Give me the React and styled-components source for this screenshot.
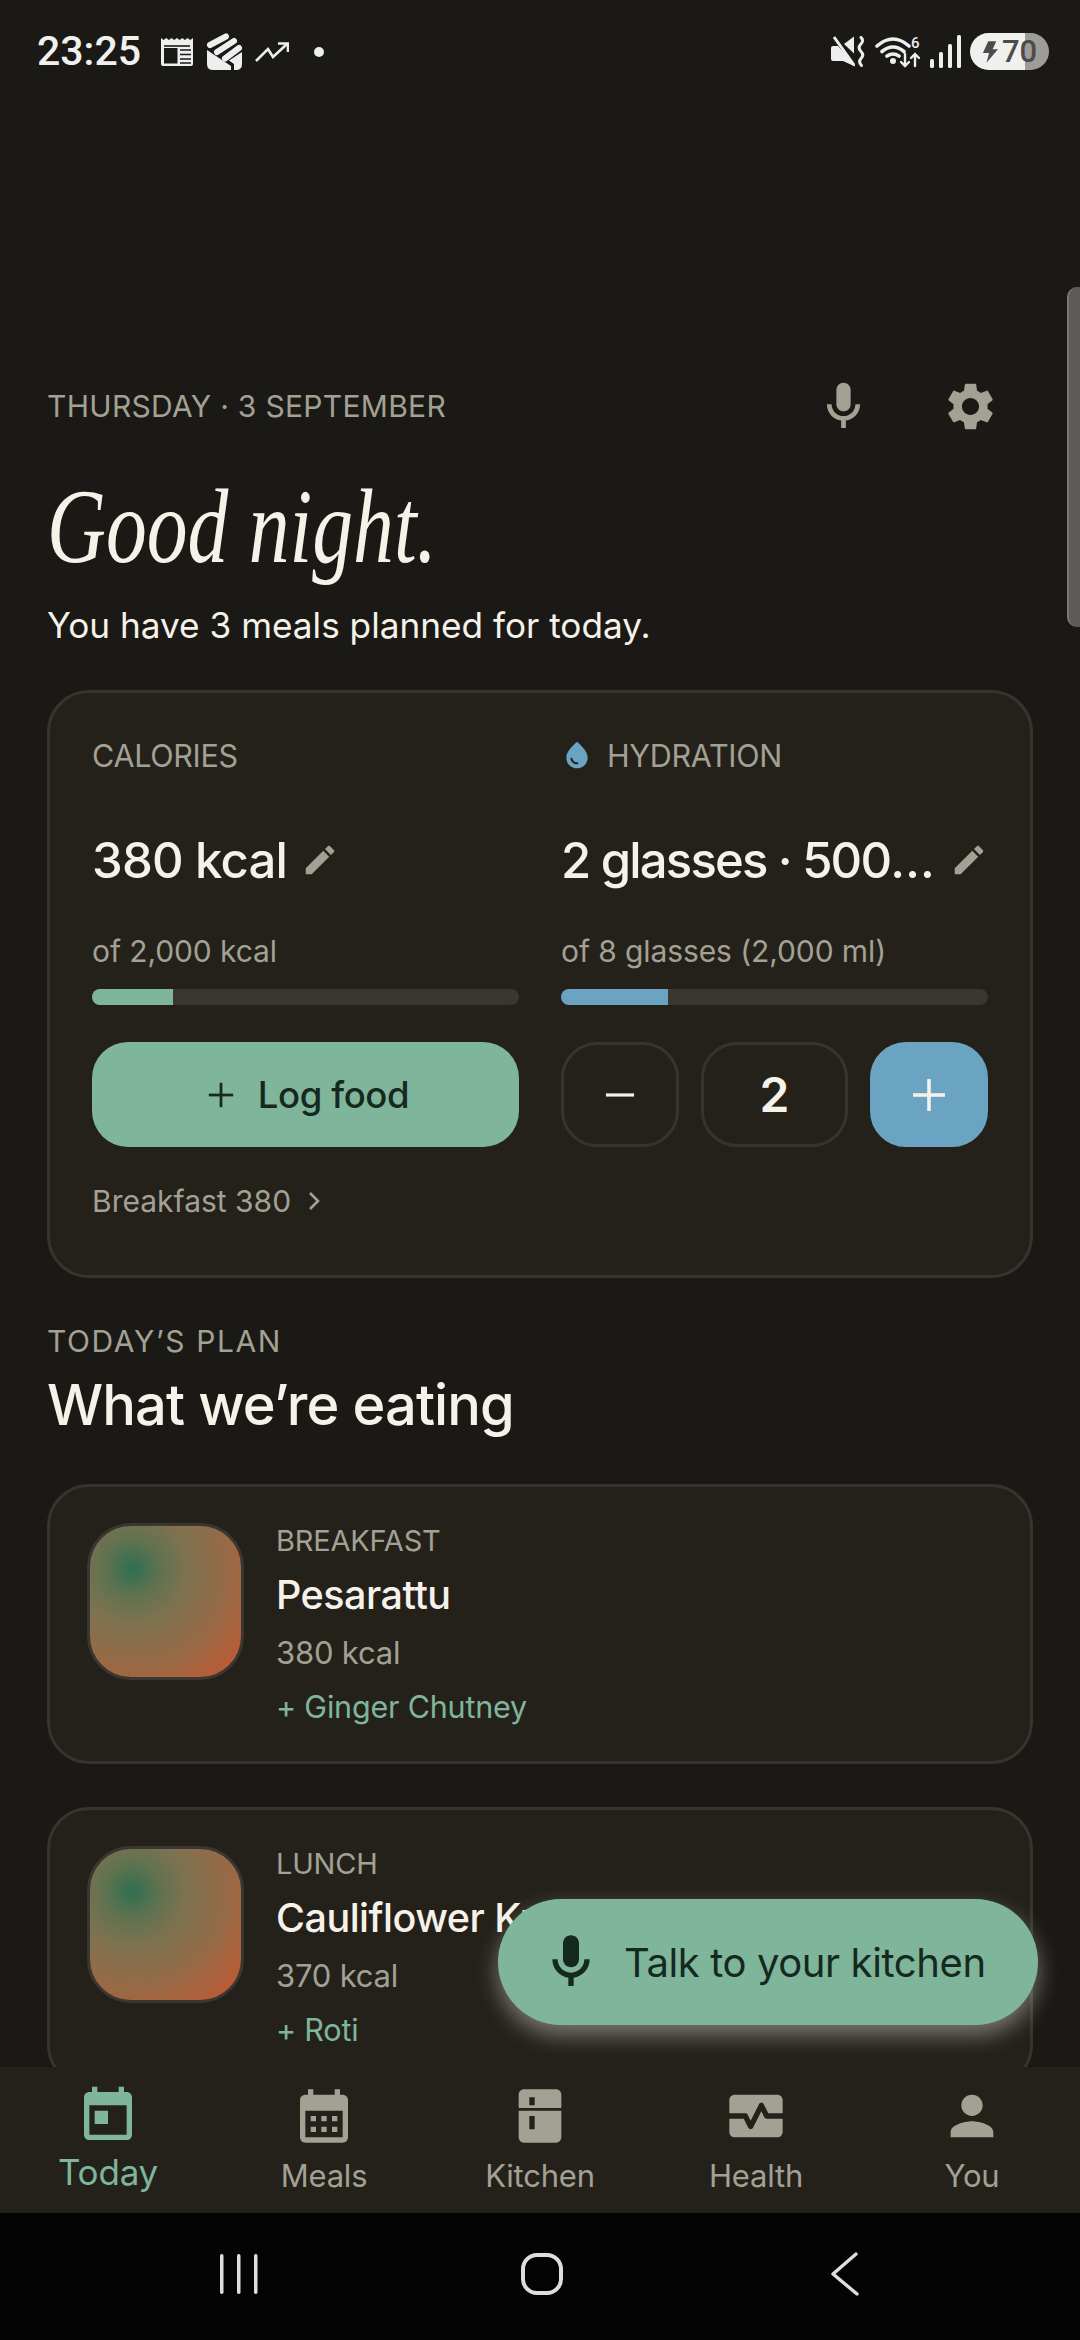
import React from "react";
import styled, { createGlobalStyle } from "styled-components";

const colors = {
  page: "#1a1915",
  card: "#24211b",
  line: "#37342e",
  track: "#3a3631",
  text: "#f6f2e9",
  muted: "#a3a094",
  sage: "#7fb59b",
  blue: "#6ba3c3",
  ink: "#16291f",
};
const sans = `Inter, "Liberation Sans", sans-serif`;

const GlobalStyle = createGlobalStyle`
  html, body {
    margin: 0;
    padding: 0;
    background: ${colors.page};
  }
  * {
    box-sizing: border-box;
  }
`;

const Phone = styled.div`
  position: relative;
  width: 1080px;
  height: 2340px;
  display: flex;
  flex-direction: column;
  overflow: hidden;
  background: ${colors.page};
  font-family: ${sans};
  color: ${colors.text};
`;

/* status bar */
const StatusBar = styled.div`
  flex: 0 0 100px;
  display: flex;
  align-items: flex-start;
  justify-content: space-between;
  padding: 33px 31px 0 37px;
`;
const StatusGroup = styled.div`
  display: flex;
  align-items: center;
  height: 37px;
  gap: ${(p) => p.$gap || 10}px;
`;
const Clock = styled.span`
  font-family: Roboto, sans-serif;
  font-size: 41px;
  font-weight: 500;
  line-height: 37px;
  color: #f0f0ee;
  margin-right: 7px;
`;
const Battery = styled.div`
  width: 79px;
  height: 37px;
  border-radius: 19px;
  display: flex;
  align-items: center;
  justify-content: center;
  gap: 4px;
  background: linear-gradient(to right, #f0f0ee 70%, #9e9c98 70%);
  color: #4c4c4c;
  font-family: Roboto, sans-serif;
  font-size: 31px;
  font-weight: 500;
`;

/* scrolling content */
const Scroll = styled.main`
  flex: 1;
  min-height: 0;
  overflow: hidden;
  padding: 276px 47px 0 47px;
`;
const DateRow = styled.div`
  height: 60px;
  display: flex;
  align-items: center;
`;
const DateText = styled.div`
  flex: 1;
  font-size: 30px;
  letter-spacing: 0.3px;
  color: ${colors.muted};
`;
const IconButton = styled.span`
  display: flex;
  color: ${colors.muted};
  margin-left: ${(p) => p.$left || 0}px;
  margin-right: ${(p) => p.$right || 0}px;
`;
const Greeting = styled.h1`
  margin: 31px 0 0;
  font-family: "Liberation Serif", serif;
  font-style: italic;
  font-weight: 400;
  font-size: 106px;
  line-height: 120px;
  transform: scaleX(0.77);
  transform-origin: left center;
  color: ${colors.text};
`;
const Subtitle = styled.p`
  margin: 13px 0 0;
  height: 90px;
  font-size: 35.2px;
  line-height: 50px;
`;
const Panel = styled.section`
  background: ${colors.card};
  border: 3px solid ${colors.line};
  border-radius: 42px;
  padding: 42px 41px 54px 42px;
  display: grid;
  grid-template-columns: 427px 427px;
  column-gap: 42px;
`;
const Column = styled.div`
  display: flex;
  flex-direction: column;
  min-width: 0;
`;
const Label = styled.div`
  display: flex;
  align-items: center;
  gap: 12px;
  height: 40px;
  font-size: 30.5px;
  letter-spacing: -0.3px;
  color: ${colors.muted};
`;
const Value = styled.div`
  display: flex;
  align-items: center;
  justify-content: ${(p) => (p.$spread ? "space-between" : "flex-start")};
  height: 60px;
  margin-top: 55px;
  gap: ${(p) => (p.$spread ? 4 : 14)}px;
`;
const ValueText = styled.span`
  font-size: 49px;
  font-weight: 500;
  letter-spacing: ${(p) => (p.$tight ? -1.8 : -0.8)}px;
  white-space: nowrap;
  overflow: hidden;
  text-overflow: ellipsis;
`;
const Target = styled.div`
  margin-top: 41px;
  height: 40px;
  line-height: 40px;
  font-size: 30px;
  letter-spacing: -0.1px;
  color: ${colors.muted};
`;
const Track = styled.div`
  margin-top: 18px;
  height: 16px;
  border-radius: 8px;
  background: ${colors.track};
  overflow: hidden;
`;
const Fill = styled.div`
  height: 100%;
  background: ${(p) => p.$color};
`;
const Controls = styled.div`
  margin-top: 37px;
  height: 105px;
  display: flex;
  gap: 22px;
`;
const LogButton = styled.button`
  flex: 1;
  border: 0;
  border-radius: 36px;
  padding: 0 0 0 6px;
  background: ${colors.sage};
  color: ${colors.ink};
  display: flex;
  align-items: center;
  justify-content: center;
  gap: 24px;
  font-family: ${sans};
  font-size: 36.5px;
  font-weight: 500;
  letter-spacing: -0.4px;
`;
const StepButton = styled.button`
  flex: ${(p) => (p.$wide ? "0 0 147px" : "1")};
  display: flex;
  align-items: center;
  justify-content: center;
  border-radius: 36px;
  border: 3px solid ${(p) => (p.$filled ? colors.blue : colors.line)};
  background: ${(p) => (p.$filled ? colors.blue : "transparent")};
  color: ${colors.text};
  font-family: ${sans};
  font-size: 48px;
  font-weight: 600;
`;
const Breakdown = styled.div`
  margin-top: 34px;
  height: 40px;
  display: flex;
  align-items: center;
  gap: 16px;
  font-size: 30px;
  color: ${colors.muted};
`;

/* plan list */
const Eyebrow = styled.div`
  margin-top: 43px;
  height: 40px;
  line-height: 40px;
  font-size: 30px;
  letter-spacing: 1.6px;
  color: ${colors.muted};
`;
const SectionTitle = styled.h2`
  margin: 8px 0 43px;
  height: 72px;
  font-size: 56px;
  line-height: 72px;
  font-weight: 500;
  letter-spacing: -0.9px;
`;
const MealCard = styled.article`
  height: 280px;
  margin-bottom: 43px;
  background: ${colors.card};
  border: 3px solid ${colors.line};
  border-radius: 42px;
  padding: 36px 37px;
  display: flex;
  gap: 32px;
`;
const Thumb = styled.div`
  flex: 0 0 157px;
  height: 157px;
  border: 3px solid ${colors.track};
  border-radius: 44px;
  background: radial-gradient(
    circle at 28% 28%,
    #2e7050 0%,
    #607250 18%,
    #7e7250 36%,
    #966a46 62%,
    #bd5a34 92%
  );
`;
const MealInfo = styled.div`
  display: flex;
  flex-direction: column;
  white-space: nowrap;
`;
const MealKind = styled.div`
  height: 36px;
  line-height: 36px;
  font-size: 29px;
  letter-spacing: -0.2px;
  color: ${colors.muted};
`;
const MealName = styled.div`
  margin-top: 10px;
  height: 52px;
  line-height: 52px;
  font-size: 39.5px;
  font-weight: 500;
  letter-spacing: -0.5px;
`;
const MealKcal = styled.div`
  margin-top: 12px;
  height: 40px;
  line-height: 40px;
  font-size: 31px;
  letter-spacing: -0.2px;
  color: ${colors.muted};
`;
const MealSide = styled.div`
  margin-top: 14px;
  height: 40px;
  line-height: 40px;
  font-size: 30.5px;
  letter-spacing: -0.2px;
  color: ${colors.sage};
`;

/* overlays */
const EdgeHandle = styled.div`
  position: absolute;
  top: 287px;
  right: 0;
  width: 13px;
  height: 340px;
  background: #5c5b57;
  border-left: 2px solid #7a7975;
  border-radius: 10px 0 0 10px;
`;
const TalkButton = styled.button`
  position: absolute;
  left: 498px;
  top: 1899px;
  width: 540px;
  height: 126px;
  border: 0;
  border-radius: 63px;
  background: ${colors.sage};
  color: ${colors.ink};
  display: flex;
  align-items: center;
  padding: 0 0 0 41px;
  gap: 21px;
  font-family: ${sans};
  font-size: 40px;
  letter-spacing: -0.4px;
  box-shadow: 0 10px 22px rgba(245, 240, 230, 0.42);
`;

/* bottom navigation */
const BottomNav = styled.nav`
  flex: 0 0 146px;
  position: relative;
  display: grid;
  grid-template-columns: repeat(5, 216px);
  background: ${colors.card};
  padding-top: 17px;
`;
const NavItem = styled.div`
  display: flex;
  flex-direction: column;
  align-items: center;
  color: ${(p) => (p.$active ? colors.sage : colors.muted)};
`;
const NavLabel = styled.span`
  margin-top: ${(p) => (p.$active ? 2 : 6)}px;
  height: 44px;
  line-height: 44px;
  font-size: ${(p) => (p.$active ? 35 : 31)}px;
  letter-spacing: -0.2px;
`;
const SystemBar = styled.div`
  flex: 0 0 127px;
  position: relative;
  background: #040404;
  display: grid;
  grid-template-columns: repeat(3, 303px);
  justify-content: center;
  justify-items: center;
  align-items: center;
  padding: 0 0 6px 4px;
`;

const Glyph = ({ size = 24, children, ...rest }) => (
  <svg width={size} height={size} viewBox="0 0 24 24" fill="currentColor" {...rest}>
    {children}
  </svg>
);

const Mic = ({ size }) => (
  <Glyph size={size}>
    <path d="M12 14c1.66 0 3-1.34 3-3V5c0-1.66-1.34-3-3-3S9 3.34 9 5v6c0 1.66 1.34 3 3 3z" />
    <path d="M17 11c0 2.76-2.24 5-5 5s-5-2.24-5-5H5c0 3.53 2.61 6.43 6 6.92V21h2v-3.08c3.39-.49 6-3.39 6-6.92h-2z" />
  </Glyph>
);
const Gear = ({ size }) => (
  <Glyph size={size}>
    <path d="M19.14 12.94c.04-.3.06-.61.06-.94 0-.32-.02-.64-.07-.94l2.03-1.58a.49.49 0 0 0 .12-.61l-1.92-3.32a.488.488 0 0 0-.59-.22l-2.39.96c-.5-.38-1.03-.7-1.62-.94l-.36-2.54a.484.484 0 0 0-.48-.41h-3.84c-.24 0-.43.17-.47.41l-.36 2.54c-.59.24-1.13.57-1.62.94l-2.39-.96c-.22-.08-.47 0-.59.22L2.74 8.87c-.12.21-.08.47.12.61l2.03 1.58c-.05.3-.09.63-.09.94s.02.64.07.94l-2.03 1.58a.49.49 0 0 0-.12.61l1.92 3.32c.12.22.37.29.59.22l2.39-.96c.5.38 1.03.7 1.62.94l.36 2.54c.05.24.24.41.48.41h3.84c.24 0 .44-.17.47-.41l.36-2.54c.59-.24 1.13-.56 1.62-.94l2.39.96c.22.08.47 0 .59-.22l1.92-3.32c.12-.22.07-.47-.12-.61l-2.01-1.58zM12 15.6c-1.98 0-3.6-1.62-3.6-3.6s1.62-3.6 3.6-3.6 3.6 1.62 3.6 3.6-1.62 3.6-3.6 3.6z" />
  </Glyph>
);
const Pencil = () => (
  <Glyph size={38} style={{ flex: "none", color: colors.muted }}>
    <path d="M3 17.25V21h3.75L17.81 9.94l-3.75-3.75L3 17.25zM20.71 7.04c.39-.39.39-1.02 0-1.41l-2.34-2.34c-.39-.39-1.02-.39-1.41 0l-1.83 1.83 3.75 3.75 1.83-1.83z" />
  </Glyph>
);
const Drop = () => (
  <Glyph size={32} style={{ color: colors.blue, marginRight: 2 }}>
    <path d="M12 2c-5.33 4.55-8 8.48-8 11.8 0 4.98 3.8 8.2 8 8.2s8-3.22 8-8.2c0-3.32-2.67-7.25-8-11.8zM7.83 14c.37 0 .67.26.74.62.41 2.22 2.28 2.98 3.64 2.87.43-.02.79.32.79.75 0 .4-.32.73-.72.75-2.13.13-4.62-1.09-5.19-4.12-.08-.45.28-.87.74-.87z" />
  </Glyph>
);
const Cross = ({ size, minusOnly }) => (
  <svg width={size} height={size} viewBox="0 0 32 32" stroke="currentColor" strokeWidth="3.4" fill="none">
    <path d="M1 16h30" />
    {!minusOnly && <path d="M16 1v30" />}
  </svg>
);
const Chevron = () => (
  <svg width="14" height="20" viewBox="0 0 14 20" fill="none" stroke={colors.muted} strokeWidth="2.6">
    <path d="M3 2l8 8-8 8" />
  </svg>
);

const TodayIcon = () => (
  <Glyph size={64}>
    <path d="M19 3h-1V1h-2v2H8V1H6v2H5c-1.11 0-1.99.9-1.99 2L3 19c0 1.1.89 2 2 2h14c1.1 0 2-.9 2-2V5c0-1.1-.9-2-2-2zm0 16H5V8h14v11zM7 10h5v5H7z" />
  </Glyph>
);
const MealsIcon = () => (
  <Glyph size={64}>
    <path d="M19 4h-1V2h-2v2H8V2H6v2H5c-1.11 0-1.99.9-1.99 2L3 20c0 1.1.89 2 2 2h14c1.1 0 2-.9 2-2V6c0-1.1-.9-2-2-2zm0 16H5V10h14v10zM9 14H7v-2h2v2zm4 0h-2v-2h2v2zm4 0h-2v-2h2v2zm-8 4H7v-2h2v2zm4 0h-2v-2h2v2zm4 0h-2v-2h2v2z" />
  </Glyph>
);
const KitchenIcon = () => (
  <Glyph size={64}>
    <path
      fillRule="evenodd"
      d="M18 2.01L6 2c-1.1 0-2 .89-2 2v5h16V4c0-1.11-.9-1.99-2-1.99zM10 8H8V5h2v3zM4 10v10c0 1.1.9 2 2 2h12c1.1 0 2-.9 2-2V10H4zm6 7H8v-5h2v5z"
    />
  </Glyph>
);
const HealthIcon = () => (
  <Glyph size={64}>
    <path d="M15.11 12.45L14 10.24l-3.11 6.21c-.16.34-.51.55-.89.55s-.73-.21-.89-.55L7.38 13H2v5c0 1.1.9 2 2 2h16c1.1 0 2-.9 2-2v-5h-6c-.38 0-.73-.21-.89-.55z" />
    <path d="M20 4H4c-1.1 0-2 .9-2 2v5h6c.38 0 .73.21.89.55L10 13.76l3.11-6.21c.34-.68 1.45-.68 1.79 0L16.62 11H22V6c0-1.1-.9-2-2-2z" />
  </Glyph>
);
const PersonIcon = () => (
  <Glyph size={64}>
    <path d="M12 12c2.21 0 4-1.79 4-4s-1.79-4-4-4-4 1.79-4 4 1.79 4 4 4zm0 2c-2.67 0-8 1.34-8 4v2h16v-2c0-2.66-5.33-4-8-4z" />
  </Glyph>
);

/* status bar pictograms */
const NewsIcon = () => (
  <svg width="32" height="30" viewBox="0 0 32 30">
    <path
      fill="#eee"
      d="M0 1l2.6 2 2.7-2 2.6 2 2.7-2 2.6 2 2.7-2 2.7 2 2.7-2 2.6 2 2.7-2 2.6 2L32 1v26q0 2-2 2H2q-2 0-2-2z"
    />
    <path stroke="#1a1915" strokeWidth="1.6" d="M3 9h26" />
    <path fill="#1a1915" d="M3 11h13.5v15.500H3z" />
    <path stroke="#1a1915" strokeWidth="1.5" d="M19 13h11M19 17.500h11M19 22h11M19 26h11" />
  </svg>
);
const WalletIcon = () => (
  <svg width="36" height="38" viewBox="0 0 36 38">
    <path stroke="#eee" strokeWidth="6" strokeLinecap="round" d="M4 12L20 3.500M11 19L28 8M19 25.500L33 15" />
    <path fill="#eee" d="M1 17l24 16v4H7q-6 0-6-6z" />
    <path fill="#eee" d="M36 19v12q0 6-6 6h-2v-6l-5-3.500z" />
  </svg>
);
const TrendIcon = () => (
  <svg width="34" height="22" viewBox="0 0 34 22" fill="none" stroke="#eee" strokeWidth="2.6">
    <path d="M1 20L13 8l5 8L32 3" />
    <path d="M23 2.500h10V11" />
  </svg>
);
const MutedIcon = () => (
  <svg width="35" height="32" viewBox="0 0 35 32" fill="#eee">
    <path d="M0 12q0-2 2-2h5l17 19v1.500L12 25H2q-2 0-2-2z" />
    <path d="M13 8l10-7.500v17z" />
    <path fill="none" stroke="#eee" strokeWidth="3" d="M3 1l20 28" />
    <path fill="none" stroke="#eee" strokeWidth="3" strokeLinecap="round" d="M30 1.500q3.500 3-.5 7-3 3.500.5 7t0 7q-3 3.500.5 7" />
  </svg>
);
const WifiIcon = () => (
  <svg width="46" height="33" viewBox="0 0 46 33" fill="none" stroke="#eee" strokeLinecap="round">
    <path strokeWidth="3.6" d="M2 11Q18-3 34 11M7 16.500q11-9 22 0M12 21q6-4 12 0" />
    <circle cx="18" cy="26" r="3" fill="#eee" stroke="none" />
    <path strokeWidth="2.4" d="M30 19v12M26 27l4 4 4-4M40 31V19M36 23l4-4 4 4" />
    <text x="36" y="13" fill="#eee" stroke="none" fontFamily="Roboto, sans-serif" fontSize="15" fontWeight="500">
      6
    </text>
  </svg>
);
const SignalIcon = () => (
  <svg width="31" height="33" viewBox="0 0 31 33" fill="#eee">
    <rect x="0" y="24" width="4" height="9" rx="1.500" />
    <rect x="9" y="17" width="4" height="16" rx="1.500" />
    <rect x="18" y="9" width="4" height="24" rx="1.500" />
    <rect x="27" y="0" width="4" height="33" rx="1.500" />
  </svg>
);
const BoltIcon = () => (
  <svg width="16" height="22" viewBox="0 0 18 24" fill="currentColor">
    <path d="M7 0h9l-4 9h6L5 24l3-11H1z" />
  </svg>
);

const MealEntry = ({ kind, name, kcal, side }) => (
  <MealCard>
    <Thumb />
    <MealInfo>
      <MealKind>{kind}</MealKind>
      <MealName>{name}</MealName>
      <MealKcal>{kcal}</MealKcal>
      <MealSide>{side}</MealSide>
    </MealInfo>
  </MealCard>
);

const tabs = [
  { label: "Today", Icon: TodayIcon, active: true },
  { label: "Meals", Icon: MealsIcon },
  { label: "Kitchen", Icon: KitchenIcon },
  { label: "Health", Icon: HealthIcon },
  { label: "You", Icon: PersonIcon },
];

export default function App() {
  return (
    <Phone>
      <GlobalStyle />
      <StatusBar>
        <StatusGroup $gap={13}>
          <Clock>23:25</Clock>
          <NewsIcon />
          <WalletIcon />
          <TrendIcon />
          <svg width="10" height="10" style={{ marginLeft: 12 }}>
            <circle cx="5" cy="5" r="5" fill="#eee" />
          </svg>
        </StatusGroup>
        <StatusGroup $gap={9}>
          <MutedIcon />
          <WifiIcon />
          <SignalIcon />
          <Battery>
            <BoltIcon />
            70
          </Battery>
        </StatusGroup>
      </StatusBar>

      <Scroll>
        <DateRow>
          <DateText>THURSDAY · 3 SEPTEMBER</DateText>
          <IconButton>
            <Mic size={57} />
          </IconButton>
          <IconButton $left={70} $right={34}>
            <Gear size={57} />
          </IconButton>
        </DateRow>
        <Greeting>Good night.</Greeting>
        <Subtitle>You have 3 meals planned for today.</Subtitle>

        <Panel>
          <Column>
            <Label>CALORIES</Label>
            <Value>
              <ValueText>380 kcal</ValueText>
              <Pencil />
            </Value>
            <Target>of 2,000 kcal</Target>
            <Track>
              <Fill $color={colors.sage} style={{ width: "19%" }} />
            </Track>
            <Controls>
              <LogButton>
                <Cross size={26} />
                Log food
              </LogButton>
            </Controls>
            <Breakdown>
              Breakfast 380
              <Chevron />
            </Breakdown>
          </Column>
          <Column>
            <Label>
              <Drop />
              HYDRATION
            </Label>
            <Value $spread>
              <ValueText $tight>2 glasses · 500 ml</ValueText>
              <Pencil />
            </Value>
            <Target>of 8 glasses (2,000 ml)</Target>
            <Track>
              <Fill $color={colors.blue} style={{ width: "25%" }} />
            </Track>
            <Controls>
              <StepButton>
                <Cross size={30} minusOnly />
              </StepButton>
              <StepButton $wide>2</StepButton>
              <StepButton $filled>
                <Cross size={34} />
              </StepButton>
            </Controls>
          </Column>
        </Panel>

        <Eyebrow>TODAY’S PLAN</Eyebrow>
        <SectionTitle>What we’re eating</SectionTitle>
        <MealEntry kind="BREAKFAST" name="Pesarattu" kcal="380 kcal" side="+ Ginger Chutney" />
        <MealEntry kind="LUNCH" name="Cauliflower Kurma" kcal="370 kcal" side="+ Roti" />
      </Scroll>

      <BottomNav>
        {tabs.map(({ label, Icon, active }) => (
          <NavItem key={label} $active={active}>
            <Icon />
            <NavLabel $active={active}>{label}</NavLabel>
          </NavItem>
        ))}
      </BottomNav>

      <SystemBar>
        <svg width="40" height="42" viewBox="0 0 40 42" fill="#dedede">
          <rect x="1" y="1" width="3.500" height="40" rx="1.700" />
          <rect x="18" y="1" width="3.500" height="40" rx="1.700" />
          <rect x="35" y="1" width="3.500" height="40" rx="1.700" />
        </svg>
        <svg width="42" height="42" viewBox="0 0 42 42" fill="none" stroke="#dedede" strokeWidth="4">
          <rect x="2" y="2" width="38" height="38" rx="14" />
        </svg>
        <svg width="28" height="44" viewBox="0 0 28 44" fill="none" stroke="#dedede" strokeWidth="3.400" strokeLinecap="round" strokeLinejoin="round">
          <path d="M25 2L2 22l24 20" />
        </svg>
      </SystemBar>

      <EdgeHandle />
      <TalkButton>
        <Mic size={64} />
        Talk to your kitchen
      </TalkButton>
    </Phone>
  );
}
